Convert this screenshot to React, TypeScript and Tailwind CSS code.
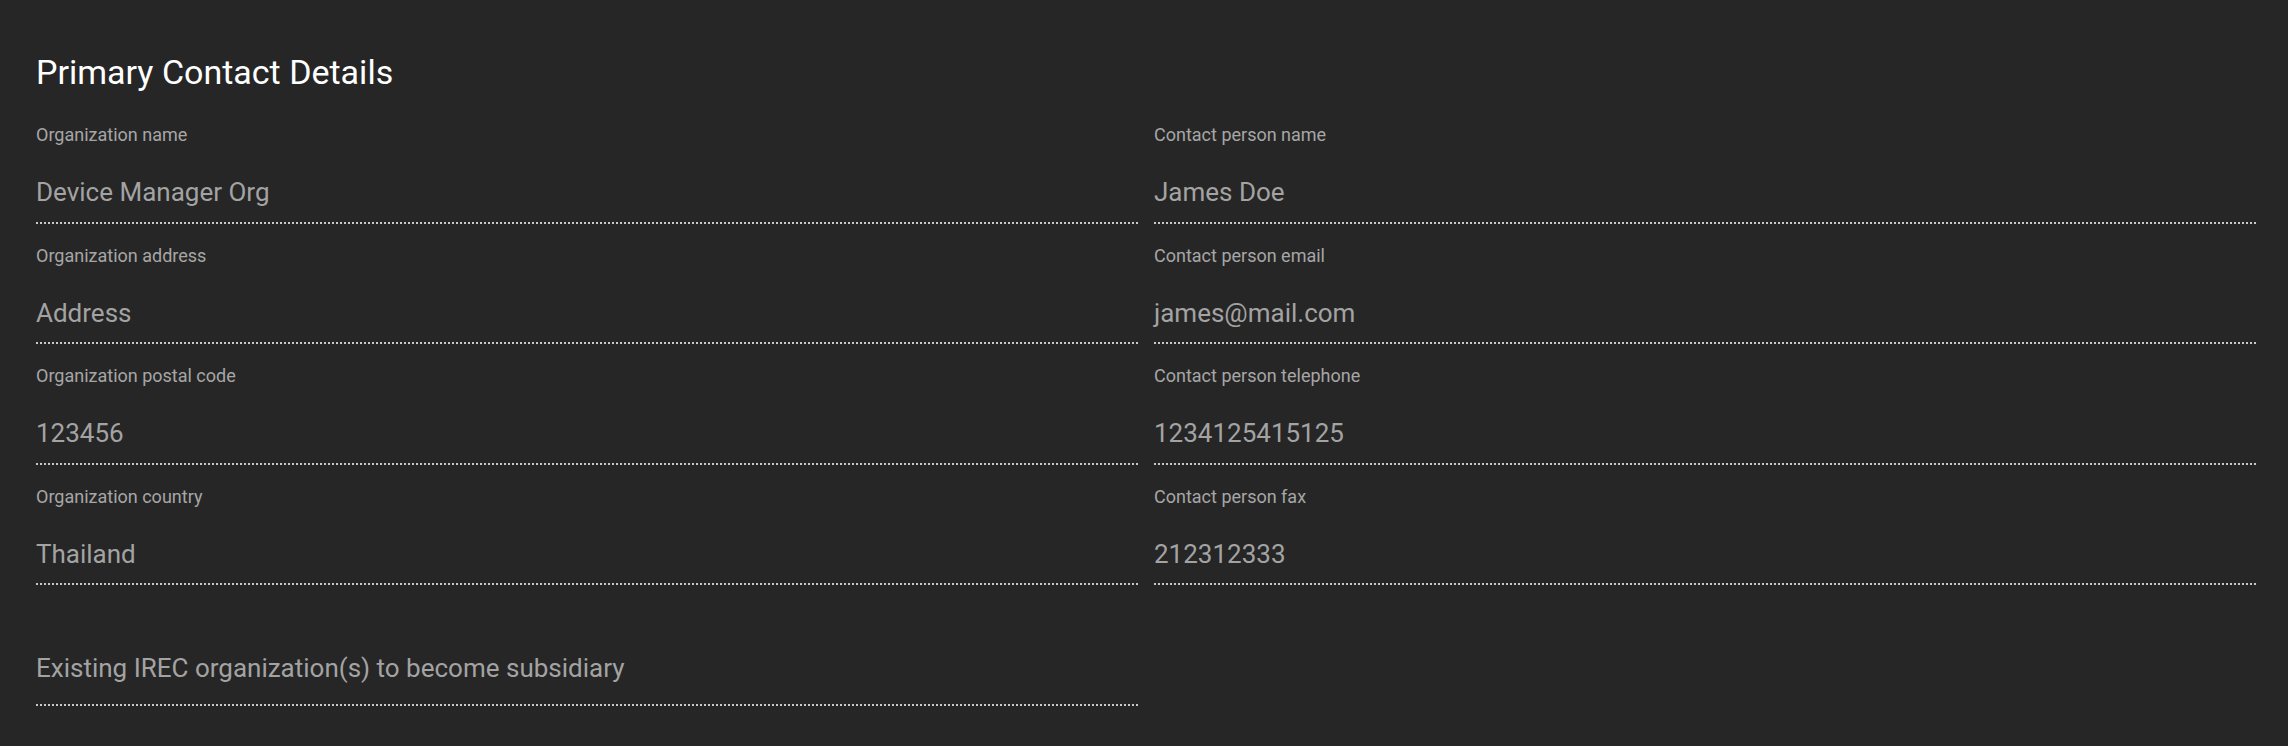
const left = [
  { label: "Organization name", value: "Device Manager Org" },
  { label: "Organization address", value: "Address" },
  { label: "Organization postal code", value: "123456" },
  { label: "Organization country", value: "Thailand" },
];

const right = [
  { label: "Contact person name", value: "James Doe" },
  { label: "Contact person email", value: "james@mail.com" },
  { label: "Contact person telephone", value: "1234125415125" },
  { label: "Contact person fax", value: "212312333" },
];

function Field({ label, value }: { label: string; value: string }) {
  return (
    <div className="flex h-[120.5px] flex-col border-b-2 border-dotted border-[#c9c9c9] pt-[22px]">
      <label className="text-[18px] leading-[20px] text-[#a6a6a6]">{label}</label>
      <div className="mt-[32px] text-[26px] leading-[30px] text-[#a3a3a3]">{value}</div>
    </div>
  );
}

export default function App() {
  return (
    <div
      className="h-[746px] overflow-hidden bg-[#262626] pl-[36px] pr-[32px] pt-[52px]"
      style={{ fontFamily: "Roboto, 'Noto Sans', sans-serif" }}
    >
      <h2 className="text-[34px] leading-[40px] text-white">Primary Contact Details</h2>
      <div className="mt-[11px] grid grid-cols-2 gap-x-4">
        <div className="flex flex-col">
          {left.map((f) => (
            <Field key={f.label} {...f} />
          ))}
        </div>
        <div className="flex flex-col">
          {right.map((f) => (
            <Field key={f.label} {...f} />
          ))}
        </div>
        <div className="flex h-[121px] flex-col border-b-2 border-dotted border-[#c9c9c9] pt-[68px]">
          <div className="text-[26px] leading-[30px] text-[#a3a3a3]">
            Existing IREC organization(s) to become subsidiary
          </div>
        </div>
      </div>
    </div>
  );
}
